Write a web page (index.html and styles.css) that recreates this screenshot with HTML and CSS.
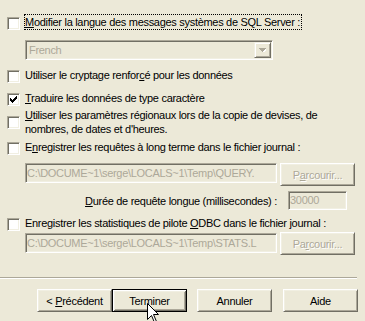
FILE: index.html
```html
<!DOCTYPE html>
<html lang="fr">
<head>
    <meta charset="UTF-8">
    <title>Configuration du DSN SQL Server</title>
    <link rel="stylesheet" href="styles.css">
</head>
<body>
    <div class="dialog">
        <div class="options">
            <div class="option row-language">
                <span class="check"></span>
                <span class="label focused"><u>M</u>odifier la langue des messages systèmes de SQL Server :</span>
            </div>
            <div class="combo">
                <span class="combo-text">French</span>
                <span class="combo-button">
                    <svg width="7" height="4" viewBox="0 0 7 4" shape-rendering="crispEdges">
                        <path d="M1 1h7v1h-1v1h-1v1h-1v1h-1v-1h-1v-1h-1v-1h-1z" fill="#fff"/>
                        <path d="M0 0h7v1h-1v1h-1v1h-1v1h-1v-1h-1v-1h-1v-1h-1z" fill="#aca899"/>
                    </svg>
                </span>
            </div>
            <div class="option row-crypt">
                <span class="check"></span>
                <span class="label">Utiliser le cryptage renfor<u>c</u>é pour les données</span>
            </div>
            <div class="option row-translate">
                <span class="check checked">
                    <svg width="7" height="7" viewBox="0 0 7 7" shape-rendering="crispEdges">
                        <path d="M6 0h1v1h-1z M5 1h2v1h-2z M0 2h1v1h-1z M4 2h3v1h-3z M0 3h2v1h-2z M3 3h3v1h-3z M0 4h5v1h-5z M1 5h3v1h-3z M2 6h1v1h-1z" fill="#000"/>
                    </svg>
                </span>
                <span class="label"><u>T</u>raduire les données de type caractère</span>
            </div>
            <div class="option row-regional">
                <span class="check"></span>
                <span class="label"><u>U</u>tiliser les paramètres régionaux lors de la copie de devises, de<br>nombres, de dates et d'heures.</span>
            </div>
            <div class="option row-query">
                <span class="check"></span>
                <span class="label">E<u>n</u>registrer les requêtes à long terme dans le fichier journal :</span>
            </div>
            <div class="path-row row-query-path">
                <div class="textbox path">C:\DOCUME~1\serge\LOCALS~1\Temp\QUERY.</div>
                <button class="button" disabled>P<u>a</u>rcourir...</button>
            </div>
            <div class="duration">
                <span class="duration-label"><u>D</u>urée de requête longue (millisecondes) :</span>
                <div class="textbox number">30000</div>
            </div>
            <div class="option row-stats">
                <span class="check"></span>
                <span class="label">Enregistrer les statistiques de pilote <u>O</u>DBC dans le fichier journal :</span>
            </div>
            <div class="path-row row-stats-path">
                <div class="textbox path">C:\DOCUME~1\serge\LOCALS~1\Temp\STATS.L</div>
                <button class="button" disabled>Pa<u>r</u>courir...</button>
            </div>
        </div>

        <div class="separator"></div>

        <div class="actions">
            <button class="button">&lt; <u>P</u>récédent</button>
            <button class="button default">Terminer</button>
            <button class="button cancel">Annuler</button>
            <button class="button help">Aide</button>
        </div>
    </div>

    <svg class="pointer" width="13" height="21" viewBox="0 0 13 21">
        <path d="M0.5 0.5 L0.5 16.5 L4.5 12.5 L7.5 19.5 L9.5 18.5 L6.5 11.5 L11.5 11.5 Z" fill="#fff" stroke="#000" stroke-width="1" stroke-linejoin="miter"/>
    </svg>
</body>
</html>
```

FILE: styles.css
```css
body {
    margin: 0;
    background-color: #ece9d8;
    font-family: "Liberation Sans", Arial, sans-serif;
    font-size: 11px;
    letter-spacing: -0.3px;
    color: #000;
    overflow: hidden;
}

.dialog {
    width: 365px;
    height: 321px;
}

.options {
    padding-left: 7px;
}

.option {
    display: flex;
    align-items: flex-start;
}

.check {
    flex: none;
    width: 13px;
    height: 13px;
    box-sizing: border-box;
    margin-top: 3px;
    margin-right: 4px;
    background-color: #fff;
    border: 1px solid;
    border-color: #aca899 #fff #fff #aca899;
    box-shadow: inset 1px 1px #716f64, inset -1px -1px #f1efe2;
    display: flex;
    align-items: center;
    justify-content: center;
}

.label {
    line-height: 14px;
    border: 1px solid transparent;
    padding-right: 1px;
    white-space: nowrap;
}

.label.focused {
    border: 1px dotted #000;
}

.row-language {
    margin-top: 14px;
}

.combo {
    margin: 10px 0 0 18px;
    width: 248px;
    height: 20px;
    box-sizing: border-box;
    border: 1px solid;
    border-color: #aca899 #fff #fff #aca899;
    box-shadow: inset 1px 1px #716f64, inset -1px -1px #f1efe2;
    display: flex;
    align-items: center;
    justify-content: space-between;
    padding: 1px;
    color: #aca899;
}

.combo-text {
    padding-left: 2px;
}

.combo-button {
    width: 17px;
    height: 16px;
    box-sizing: border-box;
    background-color: #ece9d8;
    border: 1px solid;
    border-color: #f1efe2 #716f64 #716f64 #f1efe2;
    box-shadow: inset 1px 1px #fff, inset -1px -1px #aca899;
    display: flex;
    align-items: center;
    justify-content: center;
}

.combo-button svg {
    display: block;
}

.row-crypt {
    margin-top: 7px;
}

.row-translate {
    margin-top: 7px;
}

.row-regional {
    margin-top: 1px;
    align-items: center;
}

.row-regional .check {
    margin-top: 0;
}

.row-query {
    margin-top: 2px;
}

.path-row {
    display: flex;
    align-items: flex-start;
    margin-left: 18px;
    gap: 3px;
}

.row-query-path {
    margin-top: 8px;
}

.row-stats {
    margin-top: 5px;
}

.row-stats-path {
    margin-top: 1px;
}

.row-stats-path .textbox {
    margin-top: 1px;
}

.textbox {
    box-sizing: border-box;
    border: 1px solid;
    border-color: #aca899 #fff #fff #aca899;
    box-shadow: inset 1px 1px #716f64, inset -1px -1px #f1efe2;
    color: #aca899;
    white-space: nowrap;
    overflow: hidden;
    line-height: 16px;
    padding: 1px 1px 0;
}

.textbox.path {
    width: 252px;
    height: 20px;
}

.duration {
    display: flex;
    justify-content: flex-end;
    align-items: center;
    gap: 11px;
    margin-top: 5px;
    padding-right: 18px;
}

.textbox.number {
    width: 59px;
    height: 19px;
    line-height: 15px;
}

.button {
    width: 75px;
    height: 23px;
    box-sizing: border-box;
    padding: 0;
    font-family: "Liberation Sans", Arial, sans-serif;
    font-size: 11px;
    letter-spacing: -0.3px;
    color: #000;
    background-color: #ece9d8;
    border: 1px solid;
    border-color: #fff #716f64 #716f64 #fff;
    box-shadow: inset 1px 1px #f1efe2, inset -1px -1px #aca899;
    border-radius: 0;
}

.button:disabled {
    color: #aca899;
    text-shadow: 1px 1px #fff;
}

.separator {
    margin-top: 22px;
    width: 357px;
    height: 1px;
    background-color: #aca899;
    border-bottom: 1px solid #fff;
}

.actions {
    display: flex;
    justify-content: flex-end;
    padding-right: 7px;
    margin-top: 10px;
}

.button.default {
    border: 1px solid #000;
    box-shadow: inset 1px 1px #fff, inset -1px -1px #716f64, inset 2px 2px #f1efe2, inset -2px -2px #aca899;
}

.button.cancel {
    margin-left: 10px;
}

.button.help {
    margin-left: 11px;
}

.pointer {
    position: absolute;
    left: 147px;
    top: 303px;
}
```
